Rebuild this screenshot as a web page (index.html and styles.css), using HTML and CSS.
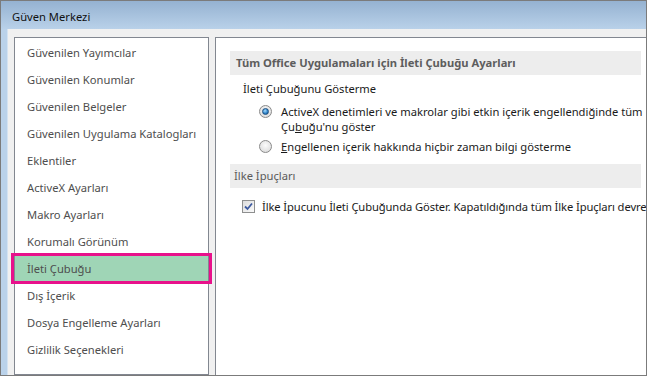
FILE: index.html
```html
<html>

<head>
    <meta charset="utf-8">
    <link rel="stylesheet" href="styles.css">
</head>
    <body>
        <div class="window">
            <div class="title-bar">Güven Merkezi</div>
            <div class="frame">
                <div class="client">
                    <ul class="nav">
                        <li>Güvenilen Yayımcılar</li>
                        <li>Güvenilen Konumlar</li>
                        <li>Güvenilen Belgeler</li>
                        <li>Güvenilen Uygulama Katalogları</li>
                        <li>Eklentiler</li>
                        <li>ActiveX Ayarları</li>
                        <li>Makro Ayarları</li>
                        <li>Korumalı Görünüm</li>
                        <li class="selected">İleti Çubuğu</li>
                        <li>Dış İçerik</li>
                        <li>Dosya Engelleme Ayarları</li>
                        <li>Gizlilik Seçenekleri</li>
                    </ul>

                    <div class="panel">
                        <div class="section-head bold">Tüm Office Uygulamaları için İleti Çubuğu Ayarları</div>
                        <div class="group">
                            <div class="group-title">İleti Çubuğunu Gösterme</div>
                            <div class="option first">
                                <span class="radio checked"></span>
                                <span class="label">ActiveX denetimleri ve makrolar gibi etkin içerik engellendiğinde tüm<br>Çu<u>b</u>uğu'nu göster</span>
                            </div>
                            <div class="option">
                                <span class="radio"></span>
                                <span class="label"><u>E</u>ngellenen içerik hakkında hiçbir zaman bilgi gösterme</span>
                            </div>
                        </div>

                        <div class="section-head">İlke İpuçları</div>
                        <div class="check-row">
                            <span class="checkbox">
                                <svg width="9" height="9" viewBox="0 0 9 9"><path d="M1 4.5 L3.5 7 L8 1.5" fill="none" stroke="#3d5aa0" stroke-width="1.8"/></svg>
                            </span>
                            <span class="label tight">İlke İpucunu İleti Çubuğunda Göster. Kapatıldığında tüm İlke İpuçları devre</span>
                        </div>
                    </div>
                </div>
            </div>
        </div>
    </body>

</html>
```

FILE: styles.css
```css
html, body{
    margin: 0;
    padding: 0;
    width: 647px;
    height: 376px;
    overflow: hidden;
    background-color: #fff;
}
.window{
    width: 647px;
    height: 376px;
    box-sizing: border-box;
    border: 1px solid #7b7b7b;
    display: flex;
    flex-direction: column;
    font-family: "Noto Sans", "Open Sans", sans-serif;
    font-size: 11.2px;
    overflow: hidden;
}
.title-bar{
    height: 28px;
    flex: none;
    padding-left: 11px;
    line-height: 31px;
    color: #111;
    background: linear-gradient(#95b2d1, #b9d1e9);
}
.frame{
    flex: 1;
    display: flex;
    min-height: 0;
    padding-left: 6px;
    background-color: #bad2ea;
}
.client{
    flex: 1;
    display: flex;
    gap: 6px;
    padding: 8px 0 0 6px;
    background-color: #f0f0f0;
    border-left: 1px solid #d4e3f2;
    min-width: 0;
}
.nav{
    width: 193px;
    flex: none;
    margin: 0;
    padding: 1px 0 0 0;
    list-style: none;
    background-color: #fff;
    border: 1px solid #828790;
}
.nav li{
    position: relative;
    height: 27px;
    line-height: 27px;
    padding-left: 12px;
    color: #4e4e4e;
    white-space: nowrap;
}
.nav li.selected{
    background-color: #9fd5b6;
}
.nav li.selected::after{
    content: "";
    position: absolute;
    top: -2px;
    bottom: -2px;
    left: -4px;
    right: -4px;
    border: 3px solid #e8118b;
}
.panel{
    flex: 1;
    min-width: 0;
    overflow: hidden;
    padding: 13px 0 0 14px;
    background-color: #fff;
    border: 1px solid #828790;
    border-right: none;
    border-bottom: none;
    white-space: nowrap;
}
.section-head{
    height: 24px;
    line-height: 24px;
    margin-right: 5px;
    padding-left: 4px;
    background-color: #ededed;
    color: #5a5a5a;
}
.section-head.bold{
    font-weight: bold;
    color: #5d5d5d;
    padding-left: 6px;
}
.group{
    padding: 6px 0 10px 13px;
    color: #1a1a1a;
    line-height: 15px;
}
.option{
    display: flex;
    align-items: flex-start;
    gap: 9px;
    margin: 5px 0 0 16px;
}
.option.first{
    margin-top: 8px;
}
.radio{
    position: relative;
    flex: none;
    width: 11px;
    height: 11px;
    margin-top: 1px;
    border-radius: 50%;
    border: 1px solid #8a8a8a;
    background: radial-gradient(circle at 50% 40%, #fbfbfb, #d6d6d6);
}
.radio.checked::after{
    content: "";
    position: absolute;
    left: 2px;
    top: 2px;
    width: 5px;
    height: 5px;
    border-radius: 50%;
    border: 1px solid #1c4f80;
    background: radial-gradient(circle at 40% 35%, #a5dcff, #2a7fc6 60%, #15548f);
}
.check-row{
    display: flex;
    align-items: center;
    gap: 7px;
    margin: 11px 0 0 12px;
    line-height: 15px;
    color: #1a1a1a;
}
.checkbox{
    flex: none;
    width: 11px;
    height: 11px;
    display: flex;
    align-items: center;
    justify-content: center;
    border: 1px solid #8e8f8f;
    background: linear-gradient(135deg, #dcdcdc, #fafafa);
}
.label u{
    text-decoration: underline;
}
.label.tight{
    letter-spacing: -0.1px;
}
```
